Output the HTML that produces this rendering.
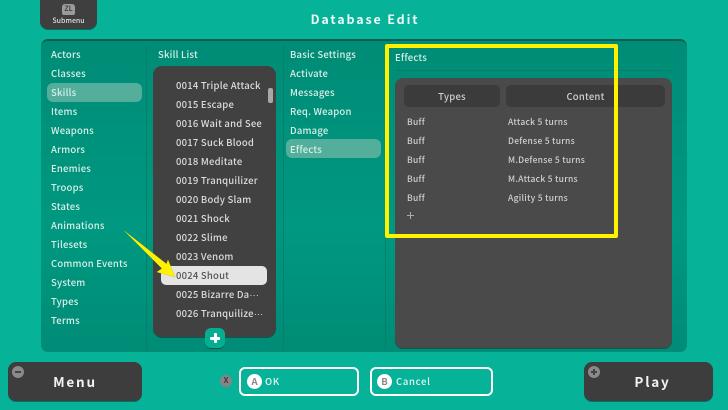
<!DOCTYPE html>
<html>
<head>
<meta charset="utf-8">
<style>
html,body{margin:0;padding:0}
body{width:728px;height:410px;overflow:hidden;background:#06b298;position:relative;font-family:"Noto Sans CJK JP","Liberation Sans",sans-serif;font-weight:500}
div{position:absolute;box-sizing:border-box}
.t{white-space:nowrap;font-size:9.5px;line-height:14px;letter-spacing:.2px;color:#d8efe9}
.l{white-space:nowrap;font-size:9.5px;line-height:14px;letter-spacing:.22px;color:#dcdcdc}
.e{white-space:nowrap;font-size:8.5px;line-height:12px;letter-spacing:.28px;color:#d0d0d0}
.d{font-family:"Liberation Sans",sans-serif;letter-spacing:0}
</style>
</head>
<body>
<div style="left:40px;top:-4px;width:57px;height:33px;background:#3f3f3f;border-radius:0 0 8px 8px;box-shadow:0 1px 0 #07705f"></div>
<div style="left:62px;top:4px;width:13px;height:11px;background:#9b9b9b;border-radius:3px 3px 2px 2px;color:#444;font-size:7px;line-height:11px;text-align:center;font-weight:700">ZL</div>
<div style="left:40px;top:15px;width:57px;text-align:center;color:#ddd;font-size:7px;line-height:12px;letter-spacing:0;white-space:nowrap">Submenu</div>
<div style="left:1px;top:10px;width:728px;text-align:center;color:#eef8f6;font-size:12.5px;line-height:18px;font-weight:700;letter-spacing:1.85px;white-space:nowrap">Database Edit</div>

<div style="left:41px;top:39px;width:646px;height:313px;background:linear-gradient(#008c76,#009880 60%,#008c76);border-radius:7px;border-top:2px solid #07604f"></div>
<div style="left:146px;top:45px;width:1px;height:305px;background:#07806b"></div>
<div style="left:283px;top:45px;width:1px;height:305px;background:#07806b"></div>
<div style="left:385px;top:45px;width:1px;height:305px;background:#07806b"></div>

<div style="left:47px;top:83px;width:95px;height:19px;background:#53ae9c;border-radius:6px"></div>
<div class="t" style="left:51px;top:47px">Actors</div>
<div class="t" style="left:51px;top:66px">Classes</div>
<div class="t" style="left:51px;top:85px">Skills</div>
<div class="t" style="left:51px;top:104px">Items</div>
<div class="t" style="left:51px;top:123px">Weapons</div>
<div class="t" style="left:51px;top:142px">Armors</div>
<div class="t" style="left:51px;top:161px">Enemies</div>
<div class="t" style="left:51px;top:180px">Troops</div>
<div class="t" style="left:51px;top:199px">States</div>
<div class="t" style="left:51px;top:218px">Animations</div>
<div class="t" style="left:51px;top:237px">Tilesets</div>
<div class="t" style="left:51px;top:256px">Common Events</div>
<div class="t" style="left:51px;top:275px">System</div>
<div class="t" style="left:51px;top:294px">Types</div>
<div class="t" style="left:51px;top:313px">Terms</div>

<div class="t" style="left:158px;top:47px">Skill List</div>
<div style="left:153px;top:66px;width:123px;height:271px;background:#414141;border-radius:9px;box-shadow:0 1px 0 #075c4e"></div>
<div style="left:268px;top:88px;width:5px;height:15px;background:#a8a8a8;border-radius:2px"></div>
<div style="left:161px;top:266px;width:106px;height:19px;background:#e4e4e4;border-radius:5px"></div>
<div class="l" style="left:176px;top:78px">0014 Triple Attack</div>
<div class="l" style="left:176px;top:97px">0015 Escape</div>
<div class="l" style="left:176px;top:116px">0016 Wait and See</div>
<div class="l" style="left:176px;top:135px">0017 Suck Blood</div>
<div class="l" style="left:176px;top:154px">0018 Meditate</div>
<div class="l" style="left:176px;top:173px">0019 Tranquilizer</div>
<div class="l" style="left:176px;top:192px">0020 Body Slam</div>
<div class="l" style="left:176px;top:211px">0021 Shock</div>
<div class="l" style="left:176px;top:230px">0022 Slime</div>
<div class="l" style="left:176px;top:249px">0023 Venom</div>
<div class="l" style="left:176px;top:268px;color:#555">0024 Shout</div>
<div class="l" style="left:176px;top:287px">0025 Bizarre Da<span class="d">···</span></div>
<div class="l" style="left:176px;top:306px">0026 Tranquilize<span class="d">···</span></div>

<div style="left:205px;top:328px;width:20px;height:20px;background:#07ad93;border-radius:6px;box-shadow:0 1px 0 #07604f"></div>
<div style="left:210px;top:336.5px;width:10px;height:3px;background:#fff;border-radius:1px"></div>
<div style="left:213.5px;top:333px;width:3px;height:10px;background:#fff;border-radius:1px"></div>

<div class="t" style="left:290px;top:47px">Basic Settings</div>
<div class="t" style="left:290px;top:66px">Activate</div>
<div class="t" style="left:290px;top:85px">Messages</div>
<div class="t" style="left:290px;top:104px">Req. Weapon</div>
<div class="t" style="left:290px;top:123px">Damage</div>
<div style="left:286px;top:139px;width:95px;height:19px;background:#53ae9c;border-radius:6px"></div>
<div class="t" style="left:290px;top:142px">Effects</div>

<div class="t" style="left:395px;top:50px">Effects</div>
<div style="left:395px;top:70px;width:277px;height:1px;background:#07806b"></div>
<div style="left:395px;top:78px;width:277px;height:270px;background:#4a4a4a;border-radius:8px;box-shadow:0 1px 0 #075c4e"></div>
<div style="left:404px;top:85px;width:96px;height:22px;background:#3b3b3b;border-radius:5px"></div>
<div style="left:506px;top:85px;width:159px;height:22px;background:#3b3b3b;border-radius:5px"></div>
<div class="l" style="left:404px;top:89px;width:96px;text-align:center;color:#cfcfcf">Types</div>
<div class="l" style="left:506px;top:89px;width:159px;text-align:center;color:#cfcfcf">Content</div>
<div class="e" style="left:407px;top:116px">Buff</div>
<div class="e" style="left:407px;top:135px">Buff</div>
<div class="e" style="left:407px;top:154px">Buff</div>
<div class="e" style="left:407px;top:173px">Buff</div>
<div class="e" style="left:407px;top:192px">Buff</div>
<div class="e" style="left:508px;top:116px">Attack 5 turns</div>
<div class="e" style="left:508px;top:135px">Defense 5 turns</div>
<div class="e" style="left:508px;top:154px">M.Defense 5 turns</div>
<div class="e" style="left:508px;top:173px">M.Attack 5 turns</div>
<div class="e" style="left:508px;top:192px">Agility 5 turns</div>
<div style="left:407px;top:215px;width:7px;height:1px;background:#aaa"></div>
<div style="left:410px;top:212px;width:1px;height:7px;background:#aaa"></div>

<div style="left:385px;top:44px;width:233px;height:194px;border:4px solid #fff200;border-radius:2px"></div>

<svg style="position:absolute;left:120px;top:225px" width="60" height="55" viewBox="0 0 60 55"><path d="M4.5 6 L46.5 39 L48 35 L55 52 L37 47 L42 43.5 Z" fill="#fff200" stroke="#d8d010" stroke-width=".5"/></svg>

<div style="left:8px;top:362px;width:134px;height:39px;background:#3d3d3d;border-radius:8px;box-shadow:0 1px 0 #07705f"></div>
<div style="left:12px;top:366px;width:12px;height:12px;background:#8a8a8a;border-radius:50%"></div>
<div style="left:15px;top:371px;width:6px;height:2px;background:#444"></div>
<div style="left:8px;top:371px;width:134px;text-align:center;color:#f2f2f2;font-size:13.5px;line-height:20px;font-weight:700;letter-spacing:1.8px;white-space:nowrap">Menu</div>

<div style="left:220px;top:375px;width:12px;height:12px;background:#858585;border-radius:50%;color:#3c3c3c;font-size:8px;line-height:12px;text-align:center;font-weight:700">X</div>

<div style="left:239px;top:367px;width:120px;height:29px;border:2px solid #fff;border-radius:6px"></div>
<div style="left:247px;top:374px;width:15px;height:15px;background:#fff;border-radius:50%;color:#888;font-size:9.5px;line-height:15px;text-align:center;font-weight:700">A</div>
<div style="left:265px;top:374px;color:#e6f6f3;font-size:9.5px;line-height:14px;letter-spacing:.7px;white-space:nowrap">OK</div>

<div style="left:370px;top:367px;width:123px;height:29px;border:2px solid #fff;border-radius:6px"></div>
<div style="left:377px;top:374px;width:15px;height:15px;background:#fff;border-radius:50%;color:#888;font-size:9.5px;line-height:15px;text-align:center;font-weight:700">B</div>
<div style="left:396px;top:374px;color:#e6f6f3;font-size:9.5px;line-height:14px;letter-spacing:.7px;white-space:nowrap">Cancel</div>

<div style="left:584px;top:362px;width:129px;height:39px;background:#3d3d3d;border-radius:8px;box-shadow:0 1px 0 #07705f"></div>
<div style="left:588px;top:366px;width:12px;height:12px;background:#8a8a8a;border-radius:50%"></div>
<div style="left:591px;top:371px;width:6px;height:2px;background:#444"></div>
<div style="left:593px;top:369px;width:2px;height:6px;background:#444"></div>
<div style="left:585px;top:371px;width:135px;text-align:center;color:#f2f2f2;font-size:13.5px;line-height:20px;font-weight:700;letter-spacing:1.8px;white-space:nowrap">Play</div>
</body>
</html>
